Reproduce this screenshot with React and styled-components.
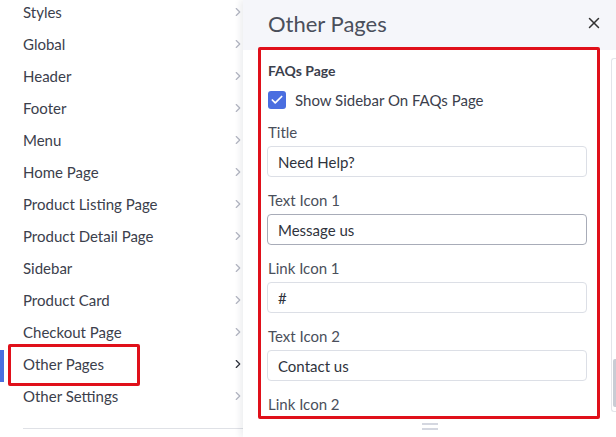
import React from 'react'
import styled, { createGlobalStyle } from 'styled-components'
import { ChevronRight, X, Check } from 'lucide-react'

const menu = [
  'Styles', 'Global', 'Header', 'Footer', 'Menu', 'Home Page',
  'Product Listing Page', 'Product Detail Page', 'Sidebar', 'Product Card',
  'Checkout Page', 'Other Pages', 'Other Settings',
]

const fields = [
  { label: 'Title', value: 'Need Help?' },
  { label: 'Text Icon 1', value: 'Message us', focused: true },
  { label: 'Link Icon 1', value: '#' },
  { label: 'Text Icon 2', value: 'Contact us' },
  { label: 'Link Icon 2', value: '' },
]

function App() {
  return (
    <Page>
      <Global />
      <Sidebar>
        <MenuList>
          {menu.map((name) => (
            <MenuItem key={name} active={name === 'Other Pages'}>
              <span>{name}</span>
              <ChevronRight size={14} strokeWidth={2} />
            </MenuItem>
          ))}
        </MenuList>
        <Divider />
        <Highlight style={{ left: 8, top: 344, width: 132, height: 42 }} />
      </Sidebar>
      <Panel>
        <Header>
          <h2>Other Pages</h2>
          <X size={18} strokeWidth={2} />
        </Header>
        <Body>
          <Scroll>
            <Section>FAQs Page</Section>
            <CheckRow>
              <Box>
                <Check size={14} strokeWidth={3} color="#fff" />
              </Box>
              <span>Show Sidebar On FAQs Page</span>
            </CheckRow>
            {fields.map((f) => (
              <Field key={f.label}>
                <Label>{f.label}</Label>
                <Input focused={f.focused}>{f.value}</Input>
              </Field>
            ))}
          </Scroll>
          <Side>
            <Thumb />
          </Side>
        </Body>
        <Handle>
          <i />
          <i />
        </Handle>
        <Highlight style={{ left: 15, top: 47, width: 342, height: 372 }} />
      </Panel>
    </Page>
  )
}

export default App

const Global = createGlobalStyle`
  html, body { margin: 0; padding: 0; background: #fff; overflow: hidden; }
  * { box-sizing: border-box; }
  body { font-family: Lato, "Noto Sans", sans-serif; color: #3b404c; }
`

const Page = styled.div`
  display: flex;
  width: 616px;
  height: 437px;
  overflow: hidden;
  position: relative;
`

const Sidebar = styled.div`
  width: 243px;
  flex-shrink: 0;
  position: relative;
  display: flex;
  flex-direction: column;
`

const MenuList = styled.div`
  margin-top: -4px;
  display: flex;
  flex-direction: column;
`

const MenuItem = styled.div`
  position: relative;
  height: 32px;
  display: flex;
  align-items: center;
  justify-content: space-between;
  padding-left: 23px;
  font-size: 15px;
  color: #3b404c;
  svg {
    color: ${(p) => (p.active ? '#2d313b' : '#b3b6c2')};
    margin-right: -2px;
  }
  ${(p) => p.active && `
    &::before {
      content: '';
      position: absolute;
      left: 0;
      top: 2px;
      width: 4px;
      height: 32px;
      background: #4a6ee0;
    }
  `}
`

const Divider = styled.div`
  margin: 16px 0 0 23px;
  border-top: 1px solid #dfe1e6;
`

const Highlight = styled.div`
  position: absolute;
  border: 3px solid #e0101a;
  border-radius: 2px;
  pointer-events: none;
`

const Panel = styled.div`
  flex: 1;
  display: flex;
  flex-direction: column;
  position: relative;
  box-shadow: -3px 0 6px rgba(30, 40, 70, 0.08);
  background: #fff;
`

const Header = styled.div`
  height: 50px;
  flex-shrink: 0;
  background: #f5f6fa;
  display: flex;
  align-items: center;
  justify-content: space-between;
  padding: 0 13px 4px 25px;
  h2 {
    margin: 0;
    font-size: 22px;
    font-weight: 400;
    color: #4a4f5b;
  }
  svg { color: #333; }
`

const Body = styled.div`
  display: flex;
  flex-shrink: 0;
  padding-top: 8px;
`

const Scroll = styled.div`
  width: 368px;
  flex-shrink: 0;
  padding: 0 24px 0 25px;
  overflow: hidden;
  height: 358px;
`

const Section = styled.div`
  font-size: 14px;
  font-weight: 700;
  color: #3b404c;
  margin-top: 4px;
  line-height: 18px;
`

const CheckRow = styled.div`
  display: flex;
  align-items: center;
  gap: 9px;
  margin-top: 11px;
  font-size: 15px;
  color: #3b404c;
`

const Box = styled.div`
  width: 18px;
  height: 18px;
  border-radius: 3px;
  background: #4a6ee0;
  display: flex;
  align-items: center;
  justify-content: center;
`

const Field = styled.div`
  margin-top: 13px;
`

const Label = styled.div`
  font-size: 15px;
  color: #4a4f5b;
  line-height: 20px;
  margin-bottom: 4px;
`

const Input = styled.div`
  height: 31px;
  margin-left: -1px;
  border: 1px solid ${(p) => (p.focused ? '#a8acb8' : '#dcdfe6')};
  border-radius: 4px;
  padding: 0 10px;
  display: flex;
  align-items: center;
  font-size: 15px;
  color: #2f333c;
`

const Side = styled.div`
  flex: 1;
  position: relative;
  height: 354px;
  border-left: 1px solid #e3e5ea;
  border-top: 1px solid #e3e5ea;
  border-bottom: 1px solid #e3e5ea;
  border-radius: 3px 0 0 3px;
`

const Thumb = styled.div`
  position: absolute;
  right: 0;
  bottom: 4px;
  width: 3px;
  height: 48px;
  background: #c9ccd4;
  border-radius: 2px 0 0 2px;
`

const Handle = styled.div`
  flex: 1;
  display: flex;
  flex-direction: column;
  align-items: center;
  justify-content: center;
  gap: 3px;
  i {
    display: block;
    width: 16px;
    height: 2px;
    background: #d4d7e0;
  }
`
